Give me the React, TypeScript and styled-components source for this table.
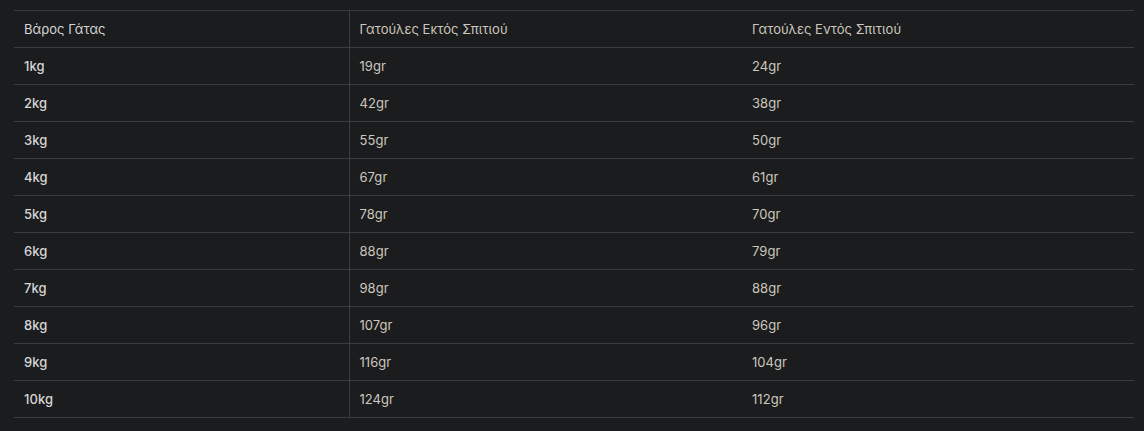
import React from "react";
import styled, { createGlobalStyle } from "styled-components";

const GlobalStyle = createGlobalStyle`
  html, body {
    margin: 0;
    padding: 0;
    background-color: #1b1c1e;
  }
  body {
    font-family: Inter, "Noto Sans", "DejaVu Sans", sans-serif;
  }
`;

const Wrapper = styled.div`
  padding: 10px 10px 14px 14px;
`;

const Table = styled.table`
  width: 1120px;
  border-collapse: collapse;
  table-layout: fixed;
  border-top: 1px solid #3b3c3e;
`;

const Row = styled.tr`
  height: 37px;
  border-bottom: 1px solid #3b3c3e;
`;

const Cell = styled.td<{ $first?: boolean; $head?: boolean }>`
  padding: 0 10px;
  font-size: 13px;
  font-weight: ${(p) => (p.$first && !p.$head ? 500 : 400)};
  letter-spacing: 0.05px;
  color: ${(p) => (p.$first ? "#d6d6d6" : "#cdc7bd")};
  border-right: ${(p) => (p.$first ? "1px solid #3b3c3e" : "none")};
  vertical-align: middle;
  white-space: nowrap;
`;

const rows: [string, string, string][] = [
  ["1kg", "19gr", "24gr"],
  ["2kg", "42gr", "38gr"],
  ["3kg", "55gr", "50gr"],
  ["4kg", "67gr", "61gr"],
  ["5kg", "78gr", "70gr"],
  ["6kg", "88gr", "79gr"],
  ["7kg", "98gr", "88gr"],
  ["8kg", "107gr", "96gr"],
  ["9kg", "116gr", "104gr"],
  ["10kg", "124gr", "112gr"],
];

const App = () => {
  return (
    <Wrapper>
      <GlobalStyle />
      <Table>
        <colgroup>
          <col style={{ width: 335 }} />
          <col style={{ width: 393 }} />
          <col style={{ width: 392 }} />
        </colgroup>
        <tbody>
          <Row>
            <Cell $first $head>Βάρος Γάτας</Cell>
            <Cell $head>Γατούλες Εκτός Σπιτιού</Cell>
            <Cell $head>Γατούλες Εντός Σπιτιού</Cell>
          </Row>
          {rows.map(([w, out, inn]) => (
            <Row key={w}>
              <Cell $first>{w}</Cell>
              <Cell>{out}</Cell>
              <Cell>{inn}</Cell>
            </Row>
          ))}
        </tbody>
      </Table>
    </Wrapper>
  );
};

export default App;
